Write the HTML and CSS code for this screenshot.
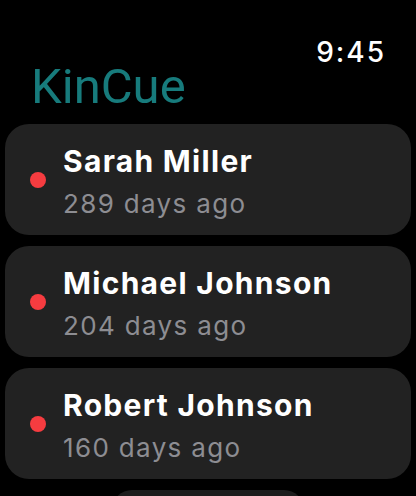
FILE: index.html
```html
<!DOCTYPE html>
<html>
<head>
<meta charset="utf-8">
<link rel="stylesheet" href="styles.css">
</head>
<body>
<div class="screen">
  <header class="header">
    <div class="time">9:45</div>
    <h1 class="title">KinCue</h1>
  </header>
  <main class="list">
    <div class="card">
      <span class="dot"></span>
      <div class="info">
        <div class="name">Sarah Miller</div>
        <div class="sub">289 days ago</div>
      </div>
    </div>
    <div class="card">
      <span class="dot"></span>
      <div class="info">
        <div class="name">Michael Johnson</div>
        <div class="sub">204 days ago</div>
      </div>
    </div>
    <div class="card">
      <span class="dot"></span>
      <div class="info">
        <div class="name">Robert Johnson</div>
        <div class="sub">160 days ago</div>
      </div>
    </div>
    <div class="more"></div>
  </main>
</div>
</body>
</html>
```
FILE: styles.css
```css
html, body {
  margin: 0;
  padding: 0;
  background: #000;
}
.screen {
  width: 416px;
  height: 496px;
  overflow: hidden;
  font-family: Inter, "Noto Sans", sans-serif;
}
.header {
  height: 124px;
  box-sizing: border-box;
  padding: 36px 32px 0 32px;
  display: flex;
  flex-direction: column;
}
.time {
  align-self: flex-end;
  color: #fff;
  font-weight: 500;
  font-size: 28px;
  line-height: 32px;
  letter-spacing: 2px;
  margin-right: -2px;
}
.title {
  margin: -6px 0 0 -1px;
  color: #177b7c;
  font-family: Roboto, sans-serif;
  font-weight: 400;
  font-size: 49px;
  line-height: 50px;
}
.list {
  display: flex;
  flex-direction: column;
  gap: 11px;
  padding: 0 5px;
}
.card {
  height: 111px;
  flex: none;
  border-radius: 24px;
  background: #222222;
  display: flex;
  align-items: center;
  padding-left: 25px;
}
.dot {
  width: 16px;
  height: 16px;
  border-radius: 50%;
  background: #f63c40;
  margin-right: 17px;
  flex: none;
}
.info {
  display: flex;
  flex-direction: column;
  gap: 5px;
  padding-top: 4px;
}
.name {
  color: #fff;
  font-weight: 700;
  font-size: 30px;
  line-height: 40px;
  letter-spacing: 1.3px;
}
.sub {
  color: #8d8d92;
  font-weight: 400;
  font-size: 26px;
  line-height: 36px;
  letter-spacing: 1.35px;
}
.more {
  align-self: center;
  width: 192px;
  height: 40px;
  flex: none;
  border-radius: 20px;
  background: #1c1c1c;
}
```
